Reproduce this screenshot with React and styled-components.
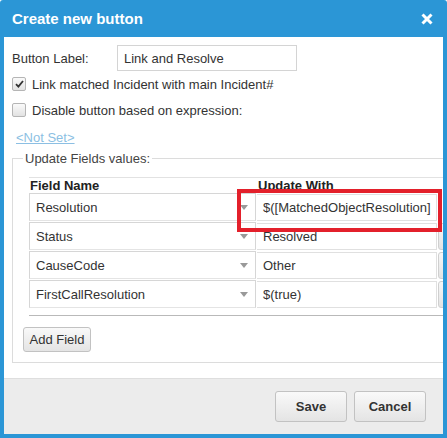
import React from "react";
import styled, { createGlobalStyle } from "styled-components";

const GlobalStyle = createGlobalStyle`
  html, body {
    margin: 0;
    padding: 0;
    background: #ffffff;
  }
  body {
    font-family: "Liberation Sans", Arial, sans-serif;
    font-size: 13px;
    color: #333;
  }
`;

const Dialog = styled.div`
  position: relative;
  width: 447px;
  height: 438px;
  box-sizing: border-box;
  background: #2b96d6;
  border-radius: 3px 3px 0 0;
  padding: 0 4px 4px 4px;
  display: flex;
  flex-direction: column;
  overflow: hidden;
`;

const Header = styled.div`
  height: 37px;
  flex: none;
  display: flex;
  align-items: center;
  justify-content: space-between;
  padding: 0 10px 0 8px;
`;

const Title = styled.div`
  color: #fff;
  font-weight: bold;
  font-size: 15px;
`;

const Close = styled.button`
  border: 0;
  background: none;
  padding: 0;
  width: 12px;
  height: 12px;
  display: flex;
  cursor: pointer;
`;

const Body = styled.div`
  flex: 1;
  background: #fff;
  padding: 8px 0 0 8px;
  overflow: hidden;
`;

const FieldRow = styled.div`
  display: flex;
  align-items: center;
  height: 26px;
`;

const Label = styled.label`
  width: 105px;
`;

const TextInput = styled.div`
  width: 180px;
  height: 26px;
  box-sizing: border-box;
  border: 1px solid #d4d4d4;
  padding: 0 6px;
  display: flex;
  align-items: center;
  color: #333;
`;

const CheckRow = styled.label`
  display: flex;
  align-items: center;
  gap: 6px;
  height: 18px;
  margin-top: ${(p) => p.$top}px;
`;

const Box = styled.span`
  width: 12px;
  height: 12px;
  border: 1px solid #b5b5b5;
  border-radius: 2px;
  background: linear-gradient(#fafafa, #e2e2e2);
  display: flex;
  align-items: center;
  justify-content: center;
`;

const NotSet = styled.a`
  display: block;
  margin: 11px 0 0 4px;
  line-height: 16px;
  color: #8cbfe3;
  text-decoration: underline;
`;

const Group = styled.fieldset`
  margin: 5px 0 0 0;
  padding: 4px 10px 10px 10px;
  width: 460px;
  border: 1px solid #dcdcdc;
  border-right: 0;
`;

const Legend = styled.legend`
  padding: 0 2px;
  color: #444;
`;

const Table = styled.div`
  margin: 7px 0 0 6px;
  border-top: 1px solid #e2e2e2;
  border-bottom: 1px solid #b9b9b9;
  position: relative;
`;

const HeadRow = styled.div`
  display: flex;
  height: 15px;
  line-height: 15px;
  font-weight: bold;
  color: #222;
`;

const HeadCell = styled.div`
  width: ${(p) => p.$w}px;
  padding-left: ${(p) => p.$pad}px;
  box-sizing: border-box;
`;

const Row = styled.div`
  display: flex;
  height: 29px;
  padding-bottom: ${(p) => (p.$last ? 6 : 0)}px;
`;

const SelectCell = styled.div`
  width: 227px;
  box-sizing: border-box;
  border: 1px solid #d6d6d6;
  border-bottom-color: #e4e4e4;
  padding: 0 7px 0 6px;
  display: flex;
  align-items: center;
  justify-content: space-between;
  margin-bottom: 1px;
`;

const Arrow = styled.span`
  width: 0;
  height: 0;
  border-left: 4px solid transparent;
  border-right: 4px solid transparent;
  border-top: 5px solid #999;
`;

const ValueCell = styled.div`
  width: 180px;
  box-sizing: border-box;
  border: 1px solid #e0e0e0;
  border-left: 0;
  padding-left: 6px;
  display: flex;
  align-items: center;
  margin: 1px 0 1px 1px;
`;

const Pick = styled.div`
  width: 30px;
  margin: 1px 0 1px 1px;
  box-sizing: border-box;
  border: 1px solid #cfcfcf;
  border-radius: 3px;
  background: linear-gradient(#f7f7f7, #e3e3e3);
`;

const Highlight = styled.div`
  position: absolute;
  left: 208px;
  top: 11px;
  width: 205px;
  height: 43px;
  box-sizing: border-box;
  border: 4px solid #e3202b;
  pointer-events: none;
`;

const Button = styled.button`
  font-family: inherit;
  font-size: 13px;
  color: #333;
  font-weight: ${(p) => (p.$bold ? "bold" : "normal")};
  height: ${(p) => p.$h}px;
  width: ${(p) => p.$w}px;
  padding: 0;
  border: 1px solid #c2c2c2;
  border-radius: 3px;
  background: linear-gradient(#f9f9f9, #e4e4e4);
  cursor: pointer;
`;

const AddButton = styled(Button)`
  margin-top: 11px;
`;

const Footer = styled.div`
  height: 56px;
  flex: none;
  box-sizing: border-box;
  background: #ececec;
  border-top: 1px solid #dedede;
  display: flex;
  align-items: center;
  justify-content: flex-end;
  gap: 7px;
  padding: 0 17px 0 0;
`;

const rows = [
  { field: "Resolution", value: "$([MatchedObjectResolution]" },
  { field: "Status", value: "Resolved" },
  { field: "CauseCode", value: "Other" },
  { field: "FirstCallResolution", value: "$(true)" },
];

const Tick = () => (
  <svg width="9" height="8" viewBox="0 0 9 8">
    <path d="M1 4.2 L3.4 6.6 L8 1" fill="none" stroke="#333" strokeWidth="1.8" />
  </svg>
);

export default function App() {
  return (
    <>
      <GlobalStyle />
      <Dialog>
        <Header>
          <Title>Create new button</Title>
          <Close aria-label="close">
            <svg width="12" height="12" viewBox="0 0 12 12">
              <path d="M1.5 1.5 L10.5 10.5 M10.5 1.5 L1.5 10.5" stroke="#fff" strokeWidth="3" />
            </svg>
          </Close>
        </Header>
        <Body>
          <FieldRow>
            <Label>Button Label:</Label>
            <TextInput>Link and Resolve</TextInput>
          </FieldRow>
          <CheckRow $top={4}>
            <Box>
              <Tick />
            </Box>
            Link matched Incident with main Incident#
          </CheckRow>
          <CheckRow $top={8}>
            <Box />
            Disable button based on expression:
          </CheckRow>
          <NotSet>&lt;Not Set&gt;</NotSet>
          <Group>
            <Legend>Update Fields values:</Legend>
            <Table>
              <HeadRow>
                <HeadCell $w={228} $pad={1}>Field Name</HeadCell>
                <HeadCell $w={180} $pad={1}>Update With</HeadCell>
              </HeadRow>
              {rows.map((r, i) => (
                <Row key={r.field} $last={i === rows.length - 1}>
                  <SelectCell>
                    {r.field}
                    <Arrow />
                  </SelectCell>
                  <ValueCell>{r.value}</ValueCell>
                  {i > 0 && <Pick />}
                </Row>
              ))}
              <Highlight />
            </Table>
            <AddButton $w={68} $h={25}>Add Field</AddButton>
          </Group>
        </Body>
        <Footer>
          <Button $bold $w={72} $h={31}>Save</Button>
          <Button $bold $w={72} $h={31}>Cancel</Button>
        </Footer>
      </Dialog>
    </>
  );
}
